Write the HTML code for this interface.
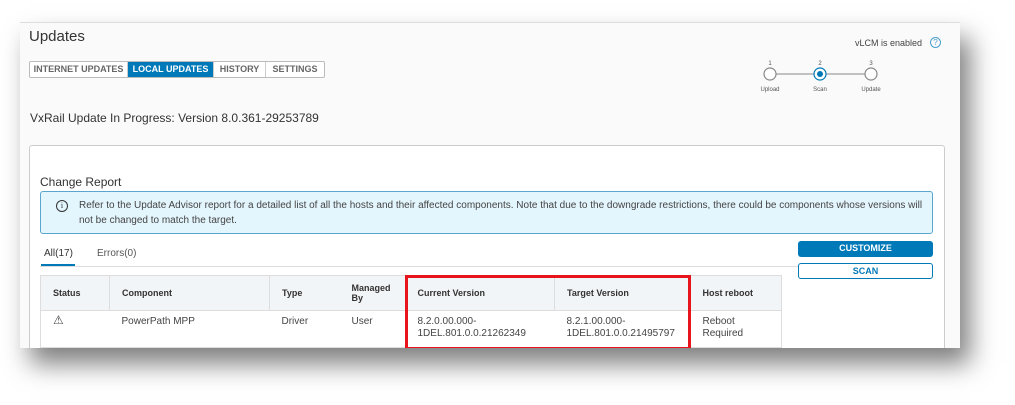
<!DOCTYPE html>
<html><head><style>
*{box-sizing:border-box;margin:0;padding:0}
body{width:1015px;height:405px;background:#fff;font-family:"Liberation Sans",sans-serif;position:relative;overflow:hidden;color:#333}
.panel{position:absolute;left:20px;top:22px;width:940px;height:326px;background:#fafafa;border-top:1px solid #ddd;box-shadow:10px 16px 24px rgba(0,0,0,.5);overflow:hidden}
.a{position:absolute}
.tabs{left:9px;top:38px;height:17px;display:flex;border:1px solid #bbb;border-radius:2px;background:#fff}
.tabs div{font-size:9px;font-weight:bold;color:#666;line-height:15px;text-align:center;border-right:1px solid #ccc}
.card{left:9px;top:122px;width:916px;height:220px;background:#fff;border:1px solid #ccc;border-radius:3px}
.info{left:20px;top:168px;width:893px;height:43px;background:#e3f5fd;border:1px solid #5aa6cf;border-radius:3px;font-size:10px;color:#444;line-height:15px;padding:6px 0 0 38px}
table{border-collapse:collapse;font-size:10px}
th{background:#f2f5f7;font-size:9px;text-align:left;font-weight:bold;height:35px;padding:0 0 0 12px;color:#333}
td{height:37px;padding:0 0 0 12px;vertical-align:top;padding-top:5px;font-size:10px;color:#444;line-height:12px;border-top:1px solid #ddd}
.btn{font-size:9px;font-weight:bold;text-align:center;border-radius:3px;width:135px;height:16px;line-height:14px}
</style></head><body>
<div class="panel">
<div class="a" style="left:9px;top:5px;font-size:15px;color:#333">Updates</div>
<div class="a tabs">
<div style="width:98px">INTERNET UPDATES</div>
<div style="width:86px;background:#0079b8;color:#fff">LOCAL UPDATES</div>
<div style="width:52px">HISTORY</div>
<div style="width:58px;border-right:0">SETTINGS</div>
</div>
<div class="a" style="left:10px;top:88px;font-size:12px;color:#333">VxRail Update In Progress: Version 8.0.361-29253789</div>
<div class="a" style="left:835px;top:15px;font-size:9px;color:#444">vLCM is enabled</div>
<div class="a" style="left:910px;top:14px;width:11px;height:11px;border:1px solid #4a9fd0;border-radius:50%;font-size:8px;color:#4a9fd0;text-align:center;line-height:9px">?</div>
<svg class="a" style="left:735px;top:35px" width="130" height="40">
<text x="15" y="7" font-size="6" text-anchor="middle" fill="#555" font-family="Liberation Sans">1</text>
<text x="65" y="7" font-size="6" text-anchor="middle" fill="#555" font-family="Liberation Sans">2</text>
<text x="116" y="7" font-size="6" text-anchor="middle" fill="#555" font-family="Liberation Sans">3</text>
<line x1="21" y1="16" x2="59" y2="16" stroke="#888"/><line x1="71" y1="16" x2="110" y2="16" stroke="#888"/>
<circle cx="15" cy="16" r="6" fill="#fff" stroke="#888" stroke-width="1.2"/>
<circle cx="65" cy="16" r="6" fill="#fff" stroke="#0079b8" stroke-width="1.2"/><circle cx="65" cy="16" r="3" fill="#0079b8"/>
<circle cx="116" cy="16" r="6" fill="#fff" stroke="#888" stroke-width="1.2"/>
<text x="15" y="33" font-size="6" text-anchor="middle" fill="#555" font-family="Liberation Sans">Upload</text>
<text x="65" y="33" font-size="6" text-anchor="middle" fill="#555" font-family="Liberation Sans">Scan</text>
<text x="116" y="33" font-size="6" text-anchor="middle" fill="#555" font-family="Liberation Sans">Update</text>
</svg>
<div class="a card"></div>
<div class="a" style="left:20px;top:152px;font-size:12px;color:#333">Change Report</div>
<div class="a info">
<div class="a" style="left:15px;top:8px;width:12px;height:12px;border:1px solid #333;border-radius:50%;font-size:8px;text-align:center;line-height:10px;font-family:'Liberation Serif',serif;color:#333">i</div>
Refer to the Update Advisor report for a detailed list of all the hosts and their affected components. Note that due to the downgrade restrictions, there could be components whose versions will<br>not be changed to match the target.</div>
<div class="a" style="left:24px;top:225px;font-size:10px;color:#333">All(17)</div>
<div class="a" style="left:21px;top:241px;width:34px;height:2px;background:#0079b8"></div>
<div class="a" style="left:77px;top:225px;font-size:10px;color:#555">Errors(0)</div>
<div class="a" style="left:20px;top:243px;width:762px;height:1px;background:#ddd"></div>
<div class="a btn" style="left:778px;top:218px;background:#0079b8;color:#fff">CUSTOMIZE</div>
<div class="a btn" style="left:778px;top:240px;border:1px solid #0079b8;color:#0079b8;background:#fff">SCAN</div>
<table class="a" style="left:20px;top:252px;width:742px;border:1px solid #ddd">
<tr><th style="width:69px">Status</th><th style="width:160px;border-left:1px solid #ddd">Component</th><th style="width:70px;border-left:1px solid #ddd">Type</th><th style="width:66px">Managed<br>By</th><th style="width:149px">Current Version</th><th style="width:136px;border-left:1px solid #ddd">Target Version</th><th>Host reboot</th></tr>
<tr><td style="font-size:12px;padding-top:3px">⚠</td><td>PowerPath MPP</td><td>Driver</td><td>User</td><td>8.2.0.00.000-<br>1DEL.801.0.0.21262349</td><td>8.2.1.00.000-<br>1DEL.801.0.0.21495797</td><td>Reboot<br>Required</td></tr>
</table>
<div class="a" style="left:385px;top:252px;width:286px;height:75px;border:3px solid #e8141c"></div>
</div>
</body></html>
